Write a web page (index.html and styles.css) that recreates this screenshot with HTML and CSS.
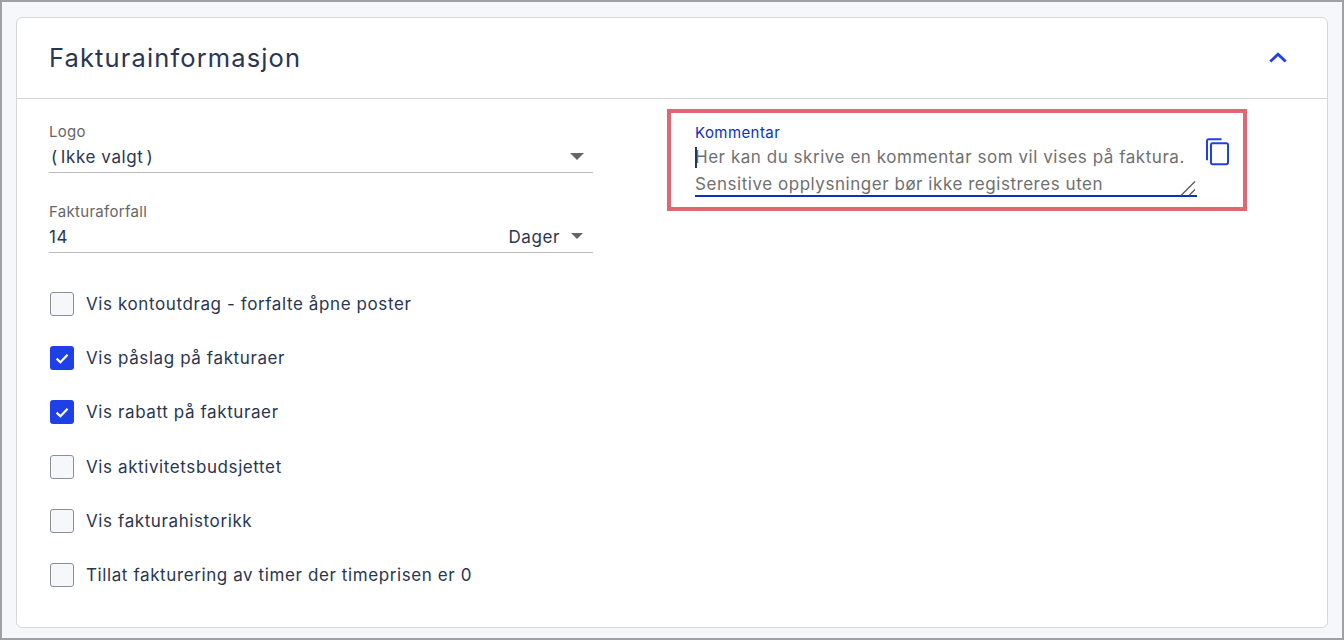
FILE: index.html
```html
<!DOCTYPE html>
<html lang="no">
<head>
<meta charset="utf-8">
<title>Fakturainformasjon</title>
<link rel="stylesheet" href="styles.css">
</head>
<body>
<main class="frame">
  <section class="card">
    <header class="card-head">
      <h2 class="title">Fakturainformasjon</h2>
      <svg class="chevron" width="24" height="24" viewBox="0 0 24 24"><path d="M4.3 15.6 12 8.2l7.7 7.4" fill="none" stroke="#1f40e6" stroke-width="2.8"/></svg>
    </header>
    <div class="card-body">
      <div class="left">
        <div class="field">
          <div class="label">Logo</div>
          <div class="control"><span class="value"><span class="paren-open">(</span>Ikke valgt<span class="paren-close">)</span></span><span class="arrow arrow-logo"></span></div>
        </div>
        <div class="field field-due">
          <div class="label">Fakturaforfall</div>
          <div class="control"><span class="value">14</span><span class="unit">Dager</span><span class="arrow arrow-days"></span></div>
        </div>
        <ul class="checks">
          <li class="check"><span class="box"></span>Vis kontoutdrag - forfalte åpne poster</li>
          <li class="check"><span class="box on"><svg width="24" height="24" viewBox="0 0 24 24"><path d="M6.6 12.6l3.8 3.7 7.2-7.6" fill="none" stroke="#fff" stroke-width="2.2"/></svg></span>Vis påslag på fakturaer</li>
          <li class="check"><span class="box on"><svg width="24" height="24" viewBox="0 0 24 24"><path d="M6.6 12.6l3.8 3.7 7.2-7.6" fill="none" stroke="#fff" stroke-width="2.2"/></svg></span>Vis rabatt på fakturaer</li>
          <li class="check"><span class="box"></span>Vis aktivitetsbudsjettet</li>
          <li class="check"><span class="box"></span>Vis fakturahistorikk</li>
          <li class="check"><span class="box"></span>Tillat fakturering av timer der timeprisen er 0</li>
        </ul>
      </div>
      <div class="comment-box">
        <div class="comment">
          <div class="comment-label">Kommentar</div>
          <div class="comment-text"><span class="caret"></span>Her kan du skrive en kommentar som vil vises på faktura.<br>Sensitive opplysninger bør ikke registreres uten
            <svg class="grip" width="18" height="16" viewBox="0 0 18 16"><path d="M2 15.5 16 1.5M10 15.5l6-6" stroke="#555" stroke-width="1.2" fill="none"/></svg>
          </div>
        </div>
        <svg class="copy" width="26" height="30" viewBox="0 0 26 30"><path d="M17.5 2.2H4.6A1.6 1.6 0 0 0 3 3.8v19.4" fill="none" stroke="#1f40e6" stroke-width="2"/><rect x="7" y="6.2" width="17" height="21" rx="1.6" fill="none" stroke="#1f40e6" stroke-width="2"/></svg>
      </div>
    </div>
  </section>
</main>
</body>
</html>
```
FILE: styles.css
```css
* { box-sizing: border-box; }
html, body { margin: 0; height: 100%; }
body {
  font-family: "Inter", "Liberation Sans", sans-serif;
  color: #2a3650;
  background: #f5f7fb;
}
.frame {
  width: 1344px;
  height: 640px;
  border: 2px solid #a0a1a3;
  padding: 15px 14px 10px;
  background: #f5f7fb;
}
.card {
  height: 100%;
  background: #fff;
  border: 1px solid #d5d7db;
  border-radius: 6px;
}
.card-head {
  height: 81px;
  border-bottom: 1px solid #d5d7db;
  padding: 0 37px 2px 32px;
  display: flex;
  align-items: center;
  justify-content: space-between;
}
.title {
  margin: 0;
  font-size: 25.5px;
  font-weight: 400;
  letter-spacing: 1.12px;
}
.chevron { display: block; margin-top: 2px; }
.card-body {
  display: flex;
  align-items: flex-start;
  padding: 10px 0 0 32px;
}
.left { width: 544px; flex: none; }
.field { padding-top: 15px; }
.field-due { padding-top: 31px; }
.label {
  font-size: 15px;
  line-height: 16px;
  letter-spacing: 0.3px;
  color: #666;
}
.control {
  height: 33px;
  padding-top: 2px;
  border-bottom: 1px solid #bdbdbd;
  display: flex;
  align-items: center;
  font-size: 17px;
  letter-spacing: 0.6px;
}
.value { flex: 1; }
.paren-open { margin-right: 3px; margin-left: 2px; }
.paren-close { margin-left: 3px; }
.unit { margin-right: 11px; margin-left: 1px; }
.arrow {
  width: 0;
  height: 0;
  margin-top: -2px;
  border-left: 7px solid transparent;
  border-right: 7px solid transparent;
  border-top: 7px solid #666;
}
.arrow-logo { margin-right: 9px; }
.arrow-days {
  margin-right: 10px;
  border-left-width: 6px;
  border-right-width: 6px;
  border-top-width: 6px;
}
.checks {
  list-style: none;
  margin: 0;
  padding: 24px 0 0 1px;
}
.check {
  height: 54.2px;
  display: flex;
  align-items: center;
  font-size: 17px;
  letter-spacing: 0.6px;
  color: #2a3650;
}
.box {
  width: 24px;
  height: 24px;
  border: 1px solid #8a8f9c;
  border-radius: 3px;
  background: #f5f7fb;
  margin-right: 12px;
  flex: none;
}
.box.on {
  background: #1f40e6;
  border: 0;
}
.box svg { display: block; }
.comment-box {
  margin-left: 74px;
  width: 580px;
  height: 102px;
  border: 4px solid #e0676f;
  padding: 12px 13px 0 24px;
  display: flex;
  align-items: flex-start;
  flex: none;
}
.comment { width: 502px; flex: none; border-bottom: 2px solid #0f2fbf; height: 72px; }
.comment-label {
  font-size: 15px;
  line-height: 16px;
  letter-spacing: 0.42px;
  color: #0f2fbf;
}
.comment-text {
  position: relative;
  font-size: 17px;
  letter-spacing: 0.54px;
  line-height: 27px;
  color: #707070;
  white-space: nowrap;
  margin-top: 3px;
}
.caret {
  position: absolute;
  left: 0;
  top: 3px;
  width: 2px;
  height: 21px;
  background: #2a3650;
}
.grip {
  position: absolute;
  right: 0;
  top: 36px;
}
.copy { margin: 12px 0 0 7px; flex: none; }
```
